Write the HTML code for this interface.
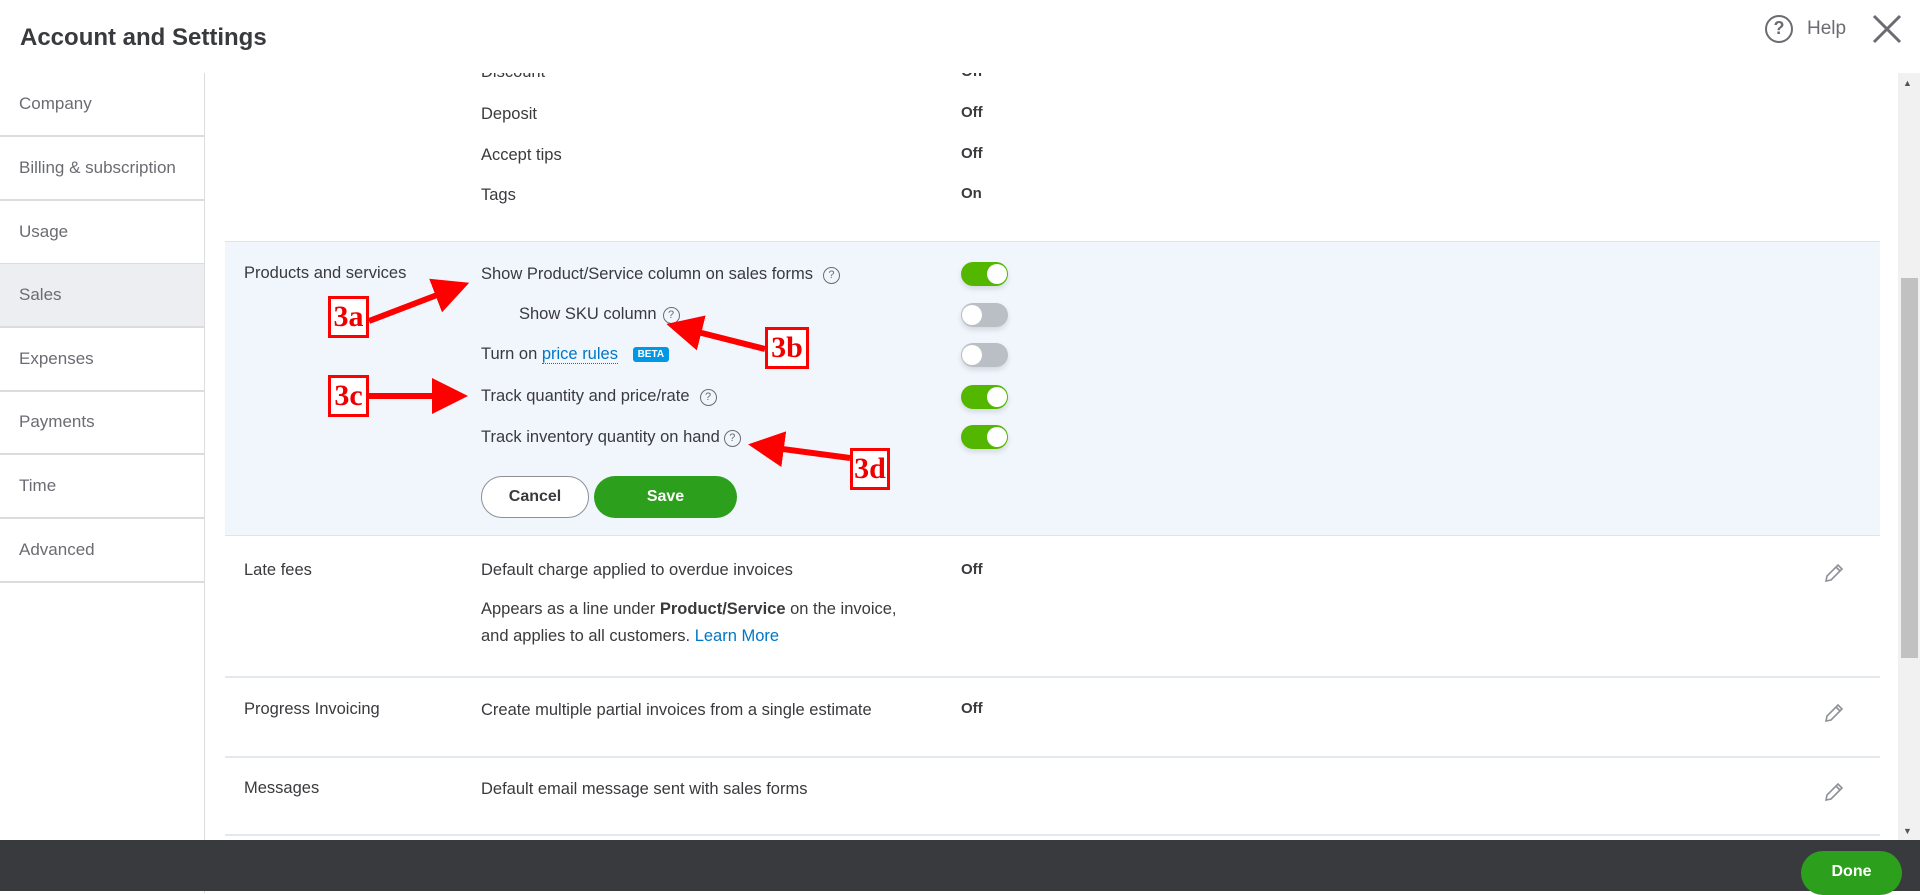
<!DOCTYPE html>
<html><head><meta charset="utf-8"><style>
*{box-sizing:border-box;margin:0;padding:0}
body{width:1920px;height:891px;overflow:hidden;background:#fff;font-family:"Liberation Sans",sans-serif;color:#393a3d;position:relative;font-size:16.5px}
.abs{position:absolute;white-space:nowrap}
.title{left:20px;top:24px;font-size:24px;font-weight:bold;color:#393a3d}
.side{position:absolute;left:0;top:73px;width:205px;height:820px;border-right:1px solid #dcdcdc}
.si{position:absolute;left:0;width:204px;height:64px;border-bottom:2px solid #dcdcdc;padding-left:19px;line-height:62px;color:#6b6c72;font-size:17px}
.sel{background:#eceef1}
.hl{position:absolute;left:225px;top:241px;width:1655px;height:295px;background:#f1f6fd;border-top:1px solid #dce4ef;border-bottom:1px solid #dce4ef}
.tg{position:absolute;left:961px;width:47px;height:24px;border-radius:12px;box-shadow:0 3px 6px rgba(0,0,0,.12)}
.tg.on{background:#53b700}.tg.off{background:#babec5}
.tg::after{content:"";position:absolute;top:2px;width:20px;height:20px;border-radius:50%;background:#fff}
.tg.on::after{right:1px}.tg.off::after{left:1px}
.q{display:inline-block;width:17px;height:17px;border:1.5px solid #6b6c72;border-radius:50%;font-size:11px;text-align:center;line-height:14px;color:#6b6c72;vertical-align:1px;margin-left:10px}
.div{position:absolute;left:225px;width:1655px;height:2px;background:#e3e7ee}
.box{position:absolute;border:3px solid #f00;background:#fff;color:#e00;font:bold 30px "Liberation Serif",serif;text-align:center;line-height:36px}
.pen{position:absolute;left:1823px}
</style></head><body>

<div class="side">
<div class="si" style="top:0">Company</div>
<div class="si" style="top:64px">Billing &amp; subscription</div>
<div class="si" style="top:128px">Usage</div>
<div class="si sel" style="top:191px">Sales</div>
<div class="si" style="top:255px">Expenses</div>
<div class="si" style="top:318px">Payments</div>
<div class="si" style="top:382px">Time</div>
<div class="si" style="top:446px">Advanced</div>
</div>

<div class="abs" style="left:481px;top:63px">Discount</div><div class="abs" style="left:961px;top:63px;font-weight:bold;font-size:15px">Off</div>
<div class="abs" style="left:481px;top:105px">Deposit</div><div class="abs" style="left:961px;top:104px;font-weight:bold;font-size:15px">Off</div>
<div class="abs" style="left:481px;top:146px">Accept tips</div><div class="abs" style="left:961px;top:145px;font-weight:bold;font-size:15px">Off</div>
<div class="abs" style="left:481px;top:186px">Tags</div><div class="abs" style="left:961px;top:185px;font-weight:bold;font-size:15px">On</div>
<div class="abs" style="left:225px;top:0;width:1655px;height:73px;background:#fff"></div>

<div class="abs title">Account and Settings</div>
<div class="abs" style="left:1765px;top:15px;width:28px;height:28px;border:2.5px solid #6b6c72;border-radius:50%;text-align:center;font-size:18px;font-weight:bold;line-height:23px;color:#6b6c72">?</div>
<div class="abs" style="left:1807px;top:18px;font-size:19px;color:#6b6c72">Help</div>
<svg class="abs" style="left:1872px;top:14px" width="30" height="30" viewBox="0 0 30 30"><path d="M2 2L28 28M28 2L2 28" stroke="#6b6c72" stroke-width="3"/></svg>

<div class="hl"></div>
<div class="abs" style="left:244px;top:264px">Products and services</div>
<div class="abs" style="left:481px;top:265px">Show Product/Service column on sales forms<span class="q">?</span></div>
<div class="abs" style="left:519px;top:305px">Show SKU column<span class="q" style="margin-left:6px">?</span></div>
<div class="abs" style="left:481px;top:345px">Turn on <span style="color:#0077c5;border-bottom:1px dotted #0077c5">price rules</span> <span style="display:inline-block;background:#0097e6;color:#fff;font-size:10px;font-weight:bold;padding:2px 5px;border-radius:3px;margin-left:10px;vertical-align:2px">BETA</span></div>
<div class="abs" style="left:481px;top:387px">Track quantity and price/rate<span class="q">?</span></div>
<div class="abs" style="left:481px;top:428px">Track inventory quantity on hand<span class="q" style="margin-left:4px">?</span></div>
<div class="tg on" style="top:262px"></div>
<div class="tg off" style="top:303px"></div>
<div class="tg off" style="top:343px"></div>
<div class="tg on" style="top:385px"></div>
<div class="tg on" style="top:425px"></div>
<div class="abs" style="left:481px;top:476px;width:108px;height:42px;border:1px solid #8d9096;border-radius:21px;background:#fff;text-align:center;line-height:40px;font-weight:bold;font-size:16px">Cancel</div>
<div class="abs" style="left:594px;top:476px;width:143px;height:42px;border-radius:21px;background:#2ca01c;color:#fff;text-align:center;line-height:42px;font-weight:bold;font-size:16px">Save</div>

<div class="abs" style="left:244px;top:561px">Late fees</div>
<div class="abs" style="left:481px;top:561px">Default charge applied to overdue invoices</div>
<div class="abs" style="left:961px;top:561px;font-weight:bold;font-size:15px">Off</div>
<div class="abs" style="left:481px;top:600px">Appears as a line under <b>Product/Service</b> on the invoice,</div>
<div class="abs" style="left:481px;top:627px">and applies to all customers. <span style="color:#0077c5">Learn More</span></div>
<div class="div" style="top:676px"></div>
<div class="abs" style="left:244px;top:700px">Progress Invoicing</div>
<div class="abs" style="left:481px;top:701px">Create multiple partial invoices from a single estimate</div>
<div class="abs" style="left:961px;top:700px;font-weight:bold;font-size:15px">Off</div>
<div class="div" style="top:756px"></div>
<div class="abs" style="left:244px;top:779px">Messages</div>
<div class="abs" style="left:481px;top:780px">Default email message sent with sales forms</div>
<div class="div" style="top:834px"></div>
<svg class="pen" style="top:562px" width="22" height="22" viewBox="0 0 22 22"><path d="M3 19l1-5L15 3l4 4L8 18z M13 5l4 4" fill="none" stroke="#8d9096" stroke-width="1.6"/></svg>
<svg class="pen" style="top:702px" width="22" height="22" viewBox="0 0 22 22"><path d="M3 19l1-5L15 3l4 4L8 18z M13 5l4 4" fill="none" stroke="#8d9096" stroke-width="1.6"/></svg>
<svg class="pen" style="top:781px" width="22" height="22" viewBox="0 0 22 22"><path d="M3 19l1-5L15 3l4 4L8 18z M13 5l4 4" fill="none" stroke="#8d9096" stroke-width="1.6"/></svg>

<div class="abs" style="left:1898px;top:73px;width:22px;height:767px;background:#f1f1f1"></div>
<div class="abs" style="left:1901px;top:278px;width:17px;height:380px;background:#c1c1c1"></div>
<div class="abs" style="left:1903px;top:78px;font-size:9px;color:#555">▲</div>
<div class="abs" style="left:1903px;top:826px;font-size:9px;color:#555">▼</div>

<div class="abs" style="left:0;top:840px;width:1920px;height:51px;background:#393a3d"></div>
<div class="abs" style="left:1801px;top:851px;width:101px;height:44px;border-radius:22px;background:#2ca01c;color:#fff;text-align:center;line-height:42px;font-weight:bold;font-size:16px">Done</div>

<svg class="abs" style="left:0;top:0" width="1920" height="891">
<defs><marker id="ah" markerWidth="6" markerHeight="6" refX="4" refY="3" orient="auto"><path d="M0 0L6 3L0 6z" fill="#f00"/></marker></defs>
<g stroke="#f00" stroke-width="6" marker-end="url(#ah)">
<line x1="369" y1="321" x2="458" y2="287"/>
<line x1="765" y1="349" x2="678" y2="327"/>
<line x1="369" y1="396" x2="456" y2="396"/>
<line x1="850" y1="458" x2="760" y2="446"/>
</g></svg>
<div class="box" style="left:328px;top:296px;width:41px;height:42px">3a</div>
<div class="box" style="left:765px;top:327px;width:44px;height:42px">3b</div>
<div class="box" style="left:328px;top:375px;width:41px;height:42px">3c</div>
<div class="box" style="left:850px;top:448px;width:40px;height:42px">3d</div>
</body></html>
